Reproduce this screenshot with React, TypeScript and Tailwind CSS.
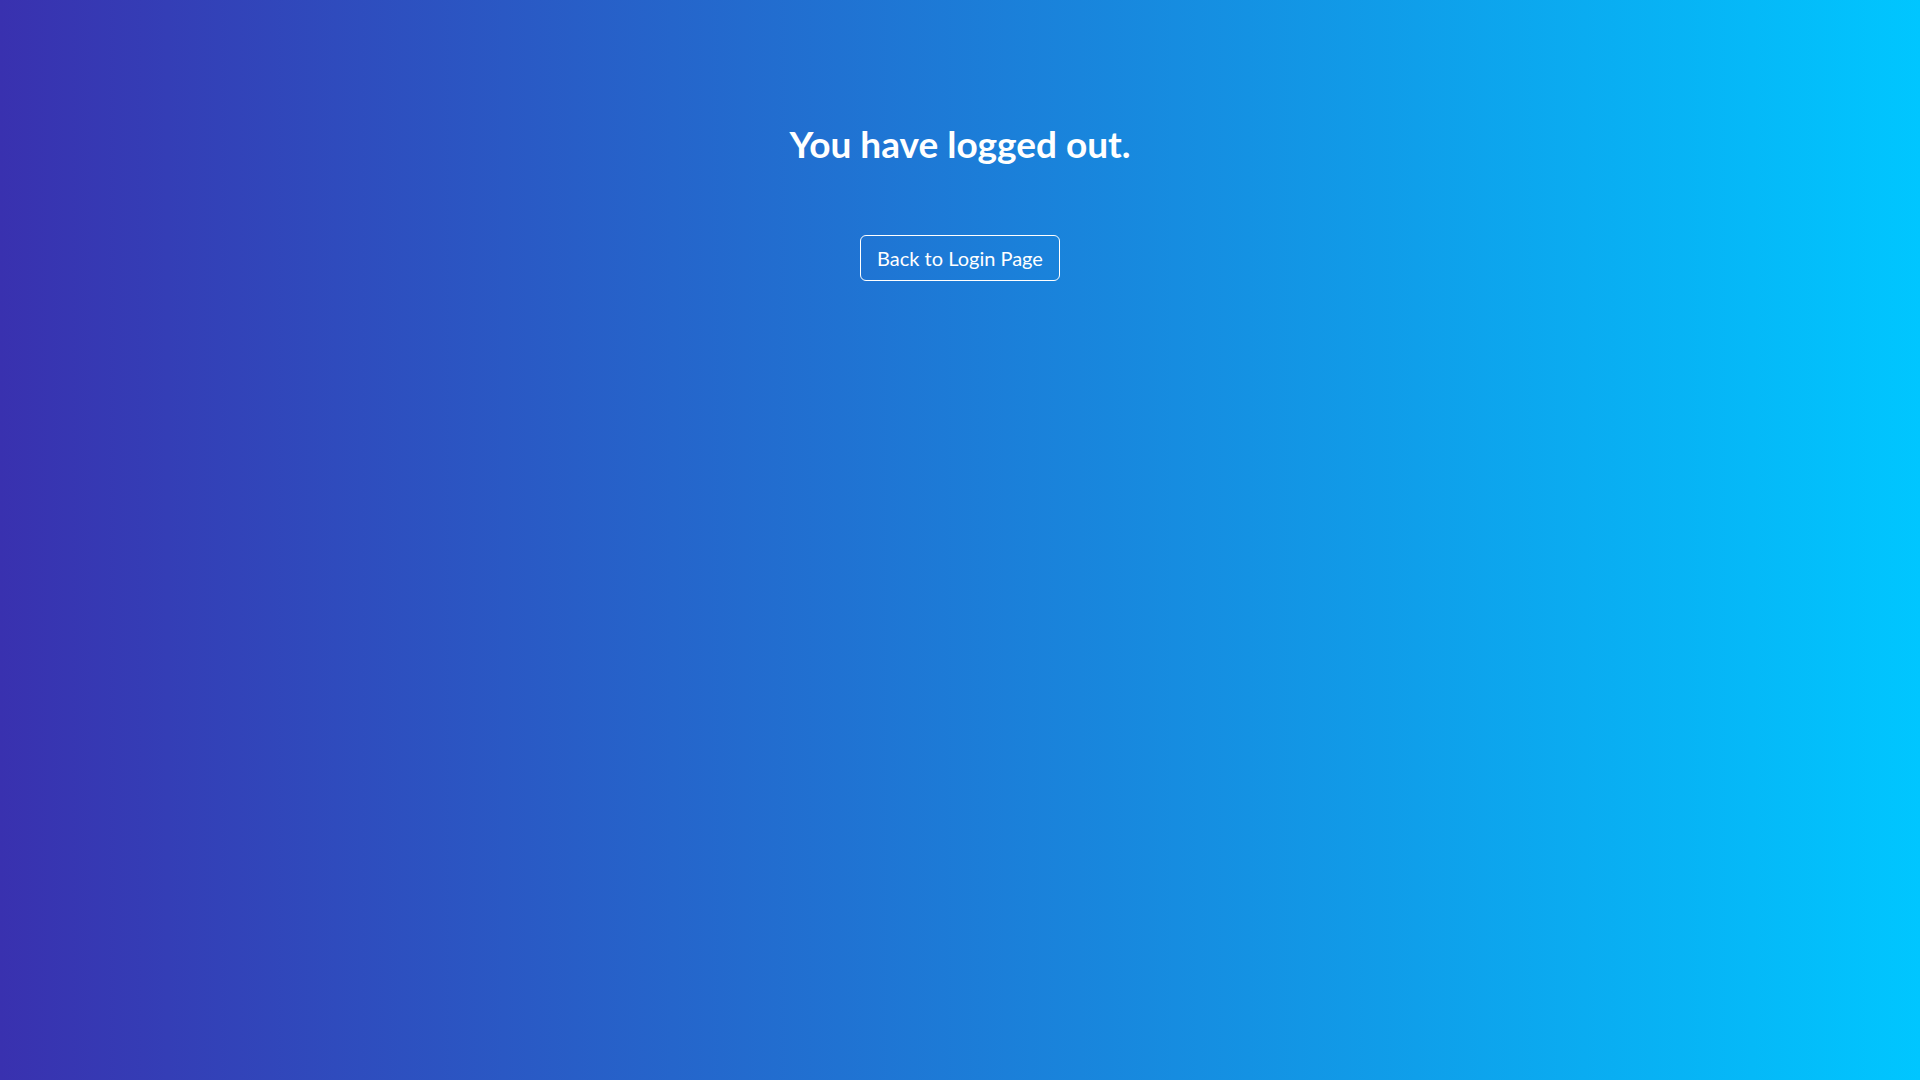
export default function App() {
  return (
    <main className="min-h-screen w-full bg-[linear-gradient(to_right,#3931af,#00c6ff)] font-['Lato','Open_Sans',sans-serif] text-white">
      <div className="flex flex-col items-center pt-[122px]">
        <h1 className="text-[37px] font-bold leading-[1.2]">You have logged out.</h1>
        <button className="mt-[69px] h-[46px] rounded-[6px] border border-white px-4 text-[20px] leading-[1.5]">
          Back to Login Page
        </button>
      </div>
    </main>
  );
}
